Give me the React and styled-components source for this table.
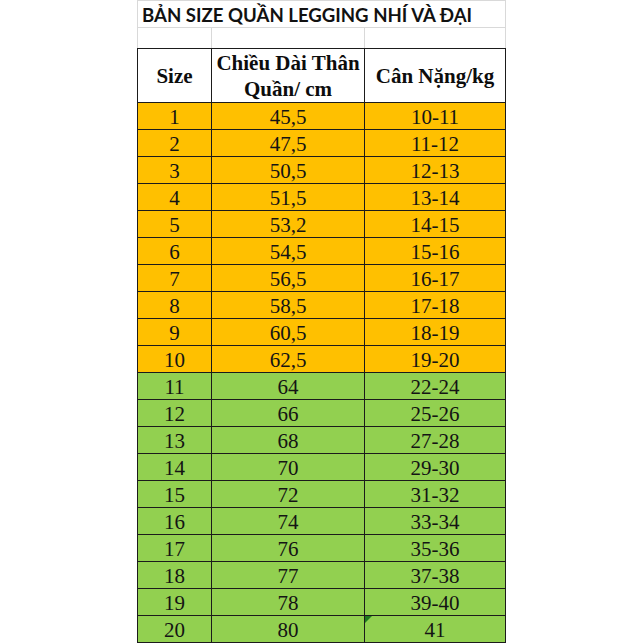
import React from "react";
import styled, { createGlobalStyle } from "styled-components";

const Global = createGlobalStyle`
  html, body { margin: 0; padding: 0; background: #ffffff; }
  body { width: 643px; height: 643px; overflow: hidden; }
`;

const GRID = "#d9d9d9";
const LINE = "#1b1b1b";
const COLS = "74px 153px 141px";

const Sheet = styled.div`
  margin-left: 137px;
  width: 369px;
  display: flex;
  flex-direction: column;
`;

const TitleRow = styled.div`
  height: 28px;
  box-sizing: border-box;
  border: 1px solid ${GRID};
  display: flex;
  align-items: center;
  padding-left: 4px;
  padding-top: 1px;
  font-family: Lato, "Open Sans", sans-serif;
  font-weight: 700;
  font-size: 18.6px;
  color: #111;
  white-space: nowrap;
`;

const SpacerRow = styled.div`
  height: 20px;
  display: grid;
  grid-template-columns: ${COLS};
  box-sizing: border-box;
  border-left: 1px solid ${GRID};
`;

const SpacerCell = styled.div`
  border-right: 1px solid ${GRID};
`;

const Table = styled.div`
  display: grid;
  grid-template-columns: ${COLS};
  border-top: 1px solid ${LINE};
  border-left: 1px solid ${LINE};
  font-family: "Liberation Serif", "Times New Roman", serif;
  color: #141414;
`;

const HeadCell = styled.div`
  height: 54px;
  box-sizing: border-box;
  border-right: 1px solid ${LINE};
  border-bottom: 1px solid ${LINE};
  background: #ffffff;
  display: flex;
  align-items: center;
  justify-content: center;
  text-align: center;
  font-weight: 700;
  font-size: 21px;
  line-height: 26px;
  padding-top: 1px;
  color: #0d0d0d;
`;

const Cell = styled.div`
  position: relative;
  height: 27px;
  box-sizing: border-box;
  border-right: 1px solid ${LINE};
  border-bottom: 1px solid ${LINE};
  background: ${(p) => (p.$tone === "green" ? "#92d050" : "#ffc000")};
  display: flex;
  align-items: flex-end;
  justify-content: center;
  font-size: 21px;
  line-height: 24px;
`;

const ErrorMark = styled.span`
  position: absolute;
  left: 0;
  top: 0;
  width: 0;
  height: 0;
  border-top: 7px solid #1e7b1e;
  border-right: 7px solid transparent;
`;

const rows = [
  ["1", "45,5", "10-11"],
  ["2", "47,5", "11-12"],
  ["3", "50,5", "12-13"],
  ["4", "51,5", "13-14"],
  ["5", "53,2", "14-15"],
  ["6", "54,5", "15-16"],
  ["7", "56,5", "16-17"],
  ["8", "58,5", "17-18"],
  ["9", "60,5", "18-19"],
  ["10", "62,5", "19-20"],
  ["11", "64", "22-24"],
  ["12", "66", "25-26"],
  ["13", "68", "27-28"],
  ["14", "70", "29-30"],
  ["15", "72", "31-32"],
  ["16", "74", "33-34"],
  ["17", "76", "35-36"],
  ["18", "77", "37-38"],
  ["19", "78", "39-40"],
  ["20", "80", "41"],
];

export default function App() {
  return (
    <>
      <Global />
      <Sheet>
        <TitleRow>BẢN SIZE QUẦN LEGGING NHÍ VÀ ĐẠI</TitleRow>
        <SpacerRow>
          <SpacerCell />
          <SpacerCell />
          <SpacerCell />
        </SpacerRow>
        <Table>
          <HeadCell>Size</HeadCell>
          <HeadCell>
            Chiều Dài Thân
            <br />
            Quần/ cm
          </HeadCell>
          <HeadCell>Cân Nặng/kg</HeadCell>
          {rows.map((r, i) => {
            const tone = i < 10 ? "orange" : "green";
            return (
              <React.Fragment key={r[0]}>
                <Cell $tone={tone}>{r[0]}</Cell>
                <Cell $tone={tone}>{r[1]}</Cell>
                <Cell $tone={tone}>
                  {r[0] === "20" && <ErrorMark />}
                  {r[2]}
                </Cell>
              </React.Fragment>
            );
          })}
        </Table>
      </Sheet>
    </>
  );
}
